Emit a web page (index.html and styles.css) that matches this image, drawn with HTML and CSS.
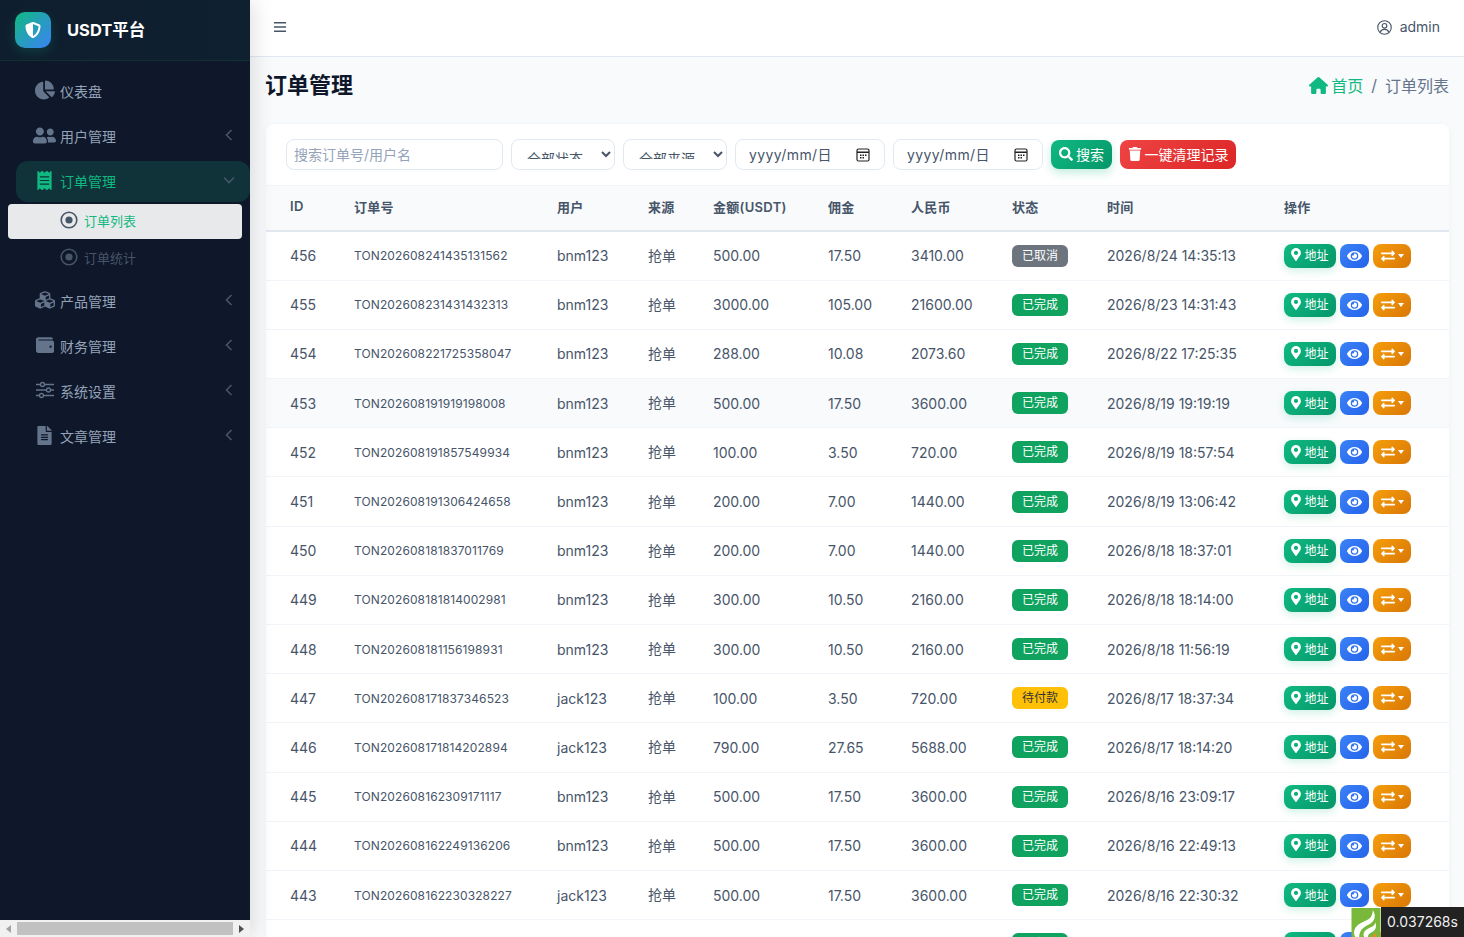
FILE: index.html
```html
<!DOCTYPE html>
<html lang="zh-CN">
<head>
    <meta charset="UTF-8">
    <title>订单管理 - USDT平台</title>
    <link rel="stylesheet" href="styles.css">
</head>
<body>
    <svg class="icon-defs" aria-hidden="true">
        <symbol id="i-pin" viewBox="0 0 384 512"><path d="M172.268 501.67C26.97 291.031 0 269.413 0 192 0 85.961 85.961 0 192 0s192 85.961 192 192c0 77.413-26.97 99.031-172.268 309.67-9.535 13.774-29.93 13.773-39.464 0zM192 272c44.183 0 80-35.817 80-80s-35.817-80-80-80-80 35.817-80 80 35.817 80 80 80z"/></symbol>
        <symbol id="i-eye" viewBox="0 0 576 512"><path d="M572.52 241.4C518.29 135.59 410.93 64 288 64S57.68 135.64 3.48 241.41a32.35 32.35 0 0 0 0 29.19C57.71 376.41 165.07 448 288 448s230.32-71.64 284.52-177.41a32.35 32.35 0 0 0 0-29.19zM288 400a144 144 0 1 1 144-144 143.93 143.93 0 0 1-144 144zm0-240a95.31 95.31 0 0 0-25.31 3.79 47.85 47.85 0 0 1-66.9 66.9A95.78 95.78 0 1 0 288 160z"/></symbol>
        <symbol id="i-swap" viewBox="0 0 512 512"><path d="M0 168v-16c0-13.255 10.745-24 24-24h360V80c0-21.367 25.899-32.042 40.971-16.971l80 80c9.372 9.373 9.372 24.569 0 33.941l-80 80C409.956 271.982 384 261.456 384 240v-48H24c-13.255 0-24-10.745-24-24zm488 152H128v-48c0-21.314-25.862-32.08-40.971-16.971l-80 80c-9.372 9.373-9.372 24.569 0 33.941l80 80C102.057 463.997 128 453.437 128 432v-48h360c13.255 0 24-10.745 24-24v-16c0-13.255-10.745-24-24-24z"/></symbol>
        <symbol id="i-left" viewBox="0 0 8 12"><path d="M6.5 1 1.5 6l5 5" fill="none" stroke="currentColor" stroke-width="1.6"/></symbol>
        <symbol id="i-radio" viewBox="0 0 18 18"><circle cx="9" cy="9" r="7.8" fill="none" stroke="currentColor" stroke-width="1.6"/><circle cx="9" cy="9" r="3.6" fill="currentColor"/></symbol>
        <symbol id="i-cal" viewBox="0 0 14 14"><rect x="1" y="1" width="12" height="12" rx="1.5" fill="none" stroke="currentColor" stroke-width="1.2"/><path d="M1 4.2h12" stroke="currentColor" stroke-width="1.6"/><path d="M4 6.5h1.5V8H4zM6.5 6.5H8V8H6.5zM9 6.5h1.5V8H9zM4 9h1.5v1.5H4zM6.5 9H8v1.5H6.5z" fill="currentColor"/></symbol>
    </svg>

    <div class="app">
        <aside class="sidebar">
            <div class="brand">
                <div class="brand-logo">
                    <svg viewBox="0 0 512 512"><path d="M466.5 83.7l-192-80a48.15 48.15 0 0 0-36.9 0l-192 80C27.7 91.1 16 108.6 16 128c0 198.5 114.5 335.7 221.5 380.3 11.8 4.9 25.1 4.9 36.9 0C360.1 472.6 496 349.3 496 128c0-19.4-11.7-36.9-29.5-44.3zM256.1 446.3l-.1-381 175.9 73.3c-3.3 151.4-82.1 261.1-175.8 307.7z"/></svg>
                </div>
                <span class="brand-name">USDT平台</span>
            </div>
            <nav class="nav">
                <a class="nav-item">
                    <span class="nav-icon"><svg class="ic-20" viewBox="0 0 544 512"><path d="M527.79 288H290.5l158.03 158.03c6.04 6.04 15.98 6.53 22.19.68 38.7-36.46 65.32-85.61 73.13-140.86 1.34-9.46-6.51-17.85-16.06-17.85zm-15.83-64.8C503.72 103.74 408.26 8.28 288.8.04 279.68-.59 272 7.1 272 16.24V240h223.77c9.14 0 16.82-7.68 16.19-16.8zM224 288V50.71c0-9.55-8.39-17.4-17.84-16.06C86.99 51.49-4.1 155.6.14 280.37 4.5 408.51 114.83 513.59 243.03 511.98c50.4-.63 96.97-16.87 135.26-44.03 7.9-5.6 8.42-17.23 1.57-24.08L224 288z"/></svg></span>
                    <span class="nav-text">仪表盘</span>
                </a>
                <a class="nav-item">
                    <span class="nav-icon"><svg class="ic-23" viewBox="0 0 640 512"><path d="M192 256c61.900 0 112-50.100 112-112S253.900 32 192 32 80 82.100 80 144s50.100 112 112 112zm76.800 32h-8.300c-20.800 10-43.900 16-68.500 16s-47.600-6-68.500-16h-8.300C51.600 288 0 339.600 0 403.200V432c0 26.500 21.500 48 48 48h288c26.500 0 48-21.500 48-48v-28.800c0-63.600-51.600-115.200-115.200-115.200zM480 256c53 0 96-43 96-96s-43-96-96-96-96 43-96 96 43 96 96 96zm48 32h-3.800c-13.900 4.800-28.600 8-44.200 8s-30.300-3.200-44.200-8H432c-20.400 0-39.200 5.900-55.700 15.400 24.400 26.300 39.700 61.200 39.700 99.800v38.400c0 2.200-.5 4.300-.6 6.400H592c26.500 0 48-21.500 48-48 0-61.900-50.100-112-112-112z"/></svg></span>
                    <span class="nav-text">用户管理</span>
                    <svg class="nav-arrow"><use href="#i-left"/></svg>
                </a>
                <a class="nav-item active">
                    <span class="nav-icon"><svg class="ic-19" viewBox="0 0 384 512"><path d="M358.4 3.2L320 48 265.6 3.2a15.9 15.9 0 0 0-19.2 0L192 48 137.6 3.2a15.9 15.9 0 0 0-19.2 0L64 48 25.6 3.2C15-4.7 0 2.8 0 16v480c0 13.2 15 20.7 25.6 12.8L64 464l54.4 44.8a15.9 15.9 0 0 0 19.2 0L192 464l54.4 44.8a15.9 15.9 0 0 0 19.2 0L320 464l38.4 44.8c10.5 7.9 25.6.4 25.6-12.8V16c0-13.2-15-20.7-25.6-12.8zM320 360c0 4.4-3.6 8-8 8H72c-4.4 0-8-3.6-8-8v-16c0-4.4 3.6-8 8-8h240c4.4 0 8 3.6 8 8v16zm0-96c0 4.4-3.6 8-8 8H72c-4.4 0-8-3.6-8-8v-16c0-4.4 3.6-8 8-8h240c4.4 0 8 3.6 8 8v16zm0-96c0 4.4-3.6 8-8 8H72c-4.4 0-8-3.6-8-8v-16c0-4.4 3.6-8 8-8h240c4.4 0 8 3.6 8 8v16z"/></svg></span>
                    <span class="nav-text">订单管理</span>
                    <svg class="nav-arrow down"><use href="#i-left"/></svg>
                </a>
                <div class="subnav">
                    <a class="sub-item current"><svg class="sub-icon"><use href="#i-radio"/></svg>订单列表</a>
                    <a class="sub-item"><svg class="sub-icon"><use href="#i-radio"/></svg>订单统计</a>
                </div>
                <a class="nav-item">
                    <span class="nav-icon"><svg class="ic-21" viewBox="0 0 512 512"><path d="M488.6 250.2L392 214V105.500c0-15-9.300-28.400-23.400-33.700l-100-37.500c-8.100-3.100-17.100-3.100-25.300 0l-100 37.500c-14.100 5.300-23.400 18.700-23.400 33.700V214l-96.600 36.200C9.300 255.500 0 268.900 0 283.900V394c0 13.600 7.700 26.100 19.900 32.200l100 50c10.100 5.100 22.100 5.100 32.200 0l103.900-52 103.900 52c10.100 5.100 22.100 5.100 32.200 0l100-50c12.200-6.100 19.900-18.600 19.900-32.200V283.900c0-15-9.300-28.400-23.400-33.700zM358 214.800l-85 31.900v-68.200l85-37v73.300zM154 104.100l102-38.200 102 38.200v.6l-102 41.400-102-41.400v-.6zm84 291.100l-85 42.500v-79.100l85-38.800v75.400zm0-112l-102 41.400-102-41.400v-.6l102-38.200 102 38.200v.6zm240 112l-85 42.500v-79.100l85-38.800v75.400zm0-112l-102 41.400-102-41.400v-.6l102-38.200 102 38.200v.6z"/></svg></span>
                    <span class="nav-text">产品管理</span>
                    <svg class="nav-arrow"><use href="#i-left"/></svg>
                </a>
                <a class="nav-item">
                    <span class="nav-icon"><svg class="ic-18" viewBox="0 0 512 512"><path d="M461.2 128H80c-8.84 0-16-7.160-16-16s7.160-16 16-16h384c8.840 0 16-7.160 16-16 0-26.510-21.490-48-48-48H64C28.650 32 0 60.650 0 96v320c0 35.350 28.650 64 64 64h397.200c28.020 0 50.800-21.530 50.800-48V176c0-26.470-22.780-48-50.800-48zM416 336c-17.670 0-32-14.330-32-32s14.330-32 32-32 32 14.330 32 32-14.330 32-32 32z"/></svg></span>
                    <span class="nav-text">财务管理</span>
                    <svg class="nav-arrow"><use href="#i-left"/></svg>
                </a>
                <a class="nav-item">
                    <span class="nav-icon"><svg class="ic-18" viewBox="0 0 18 16"><path d="M0 2.500h18M0 8h18M0 13.500h18" stroke="currentColor" stroke-width="1.500"/><circle cx="6.500" cy="2.500" r="2" fill="#0f172a" stroke="currentColor" stroke-width="1.300"/><circle cx="12.500" cy="8" r="2" fill="#0f172a" stroke="currentColor" stroke-width="1.300"/><circle cx="5.500" cy="13.500" r="2" fill="#0f172a" stroke="currentColor" stroke-width="1.300"/></svg></span>
                    <span class="nav-text">系统设置</span>
                    <svg class="nav-arrow"><use href="#i-left"/></svg>
                </a>
                <a class="nav-item">
                    <span class="nav-icon"><svg class="ic-19" viewBox="0 0 384 512"><path d="M224 136V0H24C10.700 0 0 10.700 0 24v464c0 13.300 10.700 24 24 24h336c13.300 0 24-10.700 24-24V160H248c-13.200 0-24-10.800-24-24zm64 236c0 6.600-5.400 12-12 12H108c-6.600 0-12-5.400-12-12v-8c0-6.600 5.400-12 12-12h168c6.600 0 12 5.400 12 12v8zm0-64c0 6.600-5.400 12-12 12H108c-6.600 0-12-5.400-12-12v-8c0-6.600 5.400-12 12-12h168c6.600 0 12 5.400 12 12v8zm0-72v8c0 6.600-5.400 12-12 12H108c-6.600 0-12-5.400-12-12v-8c0-6.600 5.400-12 12-12h168c6.600 0 12 5.400 12 12zm96-114.100v6.100H256V0h6.100c6.400 0 12.500 2.500 17 7l97.900 98c4.500 4.500 7 10.600 7 16.900z"/></svg></span>
                    <span class="nav-text">文章管理</span>
                    <svg class="nav-arrow"><use href="#i-left"/></svg>
                </a>
            </nav>
            <div class="side-scroll">
                <span class="scroll-arrow left"></span>
                <span class="scroll-thumb"></span>
                <span class="scroll-arrow right"></span>
            </div>
        </aside>

        <main class="main">
            <header class="topbar">
                <svg class="menu-btn" viewBox="0 0 14 12"><path d="M0 1.500h13M0 6h13M0 10.500h13" stroke="currentColor" stroke-width="1.600"/></svg>
                <div class="user">
                    <svg class="user-icon" viewBox="0 0 16 16"><circle cx="8" cy="8" r="7.200" fill="none" stroke="currentColor" stroke-width="1.200"/><circle cx="8" cy="6.200" r="2.500" fill="none" stroke="currentColor" stroke-width="1.200"/><path d="M3.400 13c.8-2 2.600-3 4.600-3s3.800 1 4.600 3" fill="none" stroke="currentColor" stroke-width="1.200"/></svg>
                    <span>admin</span>
                </div>
            </header>

            <div class="content">
                <div class="page-head">
                    <h1 class="page-title">订单管理</h1>
                    <div class="crumbs">
                        <svg class="crumb-home" viewBox="0 0 576 512"><path d="M575.8 255.500c0 18-15 32.100-32 32.100h-32l.7 160.200c0 2.700-.2 5.400-.5 8.100V472c0 22.100-17.900 40-40 40H456c-1.100 0-2.200 0-3.300-.1c-1.400 .1-2.800 .1-4.200 .1H416 392c-22.100 0-40-17.900-40-40V448 384c0-17.700-14.300-32-32-32H256c-17.700 0-32 14.300-32 32v64 24c0 22.100-17.900 40-40 40H160 128.100c-1.500 0-3-.1-4.500-.2c-1.200 .1-2.400 .2-3.600 .2H104c-22.100 0-40-17.900-40-40V360c0-.9 0-1.900 .1-2.800V287.600H32c-18 0-32-14-32-32.100c0-9 3-17 10-24L266.400 8c7-7 15-8 22-8s15 2 21 7L564.800 231.500c8 7 12 15 11 24z"/></svg>
                        <a class="crumb-link">首页</a>
                        <span class="crumb-sep">/</span>
                        <span>订单列表</span>
                    </div>
                </div>

                <section class="card">
                    <div class="filters">
                        <input class="field search-input" type="text" placeholder="搜索订单号/用户名">
                        <select class="field pick"><option>全部状态</option></select>
                        <select class="field pick"><option>全部来源</option></select>
                        <div class="field date-field"><span>yyyy/mm/日</span><svg class="cal"><use href="#i-cal"/></svg></div>
                        <div class="field date-field"><span>yyyy/mm/日</span><svg class="cal"><use href="#i-cal"/></svg></div>
                        <button class="btn btn-search">
                            <svg viewBox="0 0 512 512"><path d="M505 442.700L405.300 343c-4.500-4.500-10.600-7-17-7H372c27.600-35.300 44-79.700 44-128C416 93.100 322.900 0 208 0S0 93.100 0 208s93.100 208 208 208c48.300 0 92.700-16.400 128-44v16.300c0 6.400 2.500 12.500 7 17l99.700 99.700c9.400 9.400 24.600 9.400 33.900 0l28.300-28.300c9.400-9.400 9.400-24.600.1-34zM208 336c-70.700 0-128-57.200-128-128 0-70.700 57.200-128 128-128 70.700 0 128 57.200 128 128 0 70.700-57.200 128-128 128z"/></svg>搜索
                        </button>
                        <button class="btn btn-clear">
                            <svg viewBox="0 0 448 512"><path d="M432 32H312l-9.400-18.700A24 24 0 0 0 281.100 0H166.800a23.720 23.720 0 0 0-21.400 13.300L136 32H16A16 16 0 0 0 0 48v32a16 16 0 0 0 16 16h416a16 16 0 0 0 16-16V48a16 16 0 0 0-16-16zM53.200 467a48 48 0 0 0 47.900 45h245.800a48 48 0 0 0 47.900-45L416 128H32z"/></svg>一键清理记录
                        </button>
                    </div>

                    <table class="orders">
                        <colgroup>
                            <col class="c-id"><col class="c-no"><col class="c-user"><col class="c-src"><col class="c-amt">
                            <col class="c-fee"><col class="c-cny"><col class="c-state"><col class="c-time"><col class="c-act">
                        </colgroup>
                        <thead>
                            <tr><th>ID</th><th>订单号</th><th>用户</th><th>来源</th><th>金额(USDT)</th><th>佣金</th><th>人民币</th><th>状态</th><th>时间</th><th>操作</th></tr>
                        </thead>
                        <tbody>
                            <tr><td>456</td><td class="order-no">TON202608241435131562</td><td>bnm123</td><td>抢单</td><td>500.00</td><td>17.50</td><td>3410.00</td><td><span class="badge gray">已取消</span></td><td>2026/8/24 14:35:13</td><td><div class="acts"><a class="act act-addr"><svg><use href="#i-pin"/></svg>地址</a><a class="act act-eye"><svg><use href="#i-eye"/></svg></a><a class="act act-swap"><svg><use href="#i-swap"/></svg><i class="caret"></i></a></div></td></tr>
                            <tr><td>455</td><td class="order-no">TON202608231431432313</td><td>bnm123</td><td>抢单</td><td>3000.00</td><td>105.00</td><td>21600.00</td><td><span class="badge green">已完成</span></td><td>2026/8/23 14:31:43</td><td><div class="acts"><a class="act act-addr"><svg><use href="#i-pin"/></svg>地址</a><a class="act act-eye"><svg><use href="#i-eye"/></svg></a><a class="act act-swap"><svg><use href="#i-swap"/></svg><i class="caret"></i></a></div></td></tr>
                            <tr><td>454</td><td class="order-no">TON202608221725358047</td><td>bnm123</td><td>抢单</td><td>288.00</td><td>10.08</td><td>2073.60</td><td><span class="badge green">已完成</span></td><td>2026/8/22 17:25:35</td><td><div class="acts"><a class="act act-addr"><svg><use href="#i-pin"/></svg>地址</a><a class="act act-eye"><svg><use href="#i-eye"/></svg></a><a class="act act-swap"><svg><use href="#i-swap"/></svg><i class="caret"></i></a></div></td></tr>
                            <tr class="hovered"><td>453</td><td class="order-no">TON202608191919198008</td><td>bnm123</td><td>抢单</td><td>500.00</td><td>17.50</td><td>3600.00</td><td><span class="badge green">已完成</span></td><td>2026/8/19 19:19:19</td><td><div class="acts"><a class="act act-addr"><svg><use href="#i-pin"/></svg>地址</a><a class="act act-eye"><svg><use href="#i-eye"/></svg></a><a class="act act-swap"><svg><use href="#i-swap"/></svg><i class="caret"></i></a></div></td></tr>
                            <tr><td>452</td><td class="order-no">TON202608191857549934</td><td>bnm123</td><td>抢单</td><td>100.00</td><td>3.50</td><td>720.00</td><td><span class="badge green">已完成</span></td><td>2026/8/19 18:57:54</td><td><div class="acts"><a class="act act-addr"><svg><use href="#i-pin"/></svg>地址</a><a class="act act-eye"><svg><use href="#i-eye"/></svg></a><a class="act act-swap"><svg><use href="#i-swap"/></svg><i class="caret"></i></a></div></td></tr>
                            <tr><td>451</td><td class="order-no">TON202608191306424658</td><td>bnm123</td><td>抢单</td><td>200.00</td><td>7.00</td><td>1440.00</td><td><span class="badge green">已完成</span></td><td>2026/8/19 13:06:42</td><td><div class="acts"><a class="act act-addr"><svg><use href="#i-pin"/></svg>地址</a><a class="act act-eye"><svg><use href="#i-eye"/></svg></a><a class="act act-swap"><svg><use href="#i-swap"/></svg><i class="caret"></i></a></div></td></tr>
                            <tr><td>450</td><td class="order-no">TON202608181837011769</td><td>bnm123</td><td>抢单</td><td>200.00</td><td>7.00</td><td>1440.00</td><td><span class="badge green">已完成</span></td><td>2026/8/18 18:37:01</td><td><div class="acts"><a class="act act-addr"><svg><use href="#i-pin"/></svg>地址</a><a class="act act-eye"><svg><use href="#i-eye"/></svg></a><a class="act act-swap"><svg><use href="#i-swap"/></svg><i class="caret"></i></a></div></td></tr>
                            <tr><td>449</td><td class="order-no">TON202608181814002981</td><td>bnm123</td><td>抢单</td><td>300.00</td><td>10.50</td><td>2160.00</td><td><span class="badge green">已完成</span></td><td>2026/8/18 18:14:00</td><td><div class="acts"><a class="act act-addr"><svg><use href="#i-pin"/></svg>地址</a><a class="act act-eye"><svg><use href="#i-eye"/></svg></a><a class="act act-swap"><svg><use href="#i-swap"/></svg><i class="caret"></i></a></div></td></tr>
                            <tr><td>448</td><td class="order-no">TON202608181156198931</td><td>bnm123</td><td>抢单</td><td>300.00</td><td>10.50</td><td>2160.00</td><td><span class="badge green">已完成</span></td><td>2026/8/18 11:56:19</td><td><div class="acts"><a class="act act-addr"><svg><use href="#i-pin"/></svg>地址</a><a class="act act-eye"><svg><use href="#i-eye"/></svg></a><a class="act act-swap"><svg><use href="#i-swap"/></svg><i class="caret"></i></a></div></td></tr>
                            <tr><td>447</td><td class="order-no">TON202608171837346523</td><td>jack123</td><td>抢单</td><td>100.00</td><td>3.50</td><td>720.00</td><td><span class="badge yellow">待付款</span></td><td>2026/8/17 18:37:34</td><td><div class="acts"><a class="act act-addr"><svg><use href="#i-pin"/></svg>地址</a><a class="act act-eye"><svg><use href="#i-eye"/></svg></a><a class="act act-swap"><svg><use href="#i-swap"/></svg><i class="caret"></i></a></div></td></tr>
                            <tr><td>446</td><td class="order-no">TON202608171814202894</td><td>jack123</td><td>抢单</td><td>790.00</td><td>27.65</td><td>5688.00</td><td><span class="badge green">已完成</span></td><td>2026/8/17 18:14:20</td><td><div class="acts"><a class="act act-addr"><svg><use href="#i-pin"/></svg>地址</a><a class="act act-eye"><svg><use href="#i-eye"/></svg></a><a class="act act-swap"><svg><use href="#i-swap"/></svg><i class="caret"></i></a></div></td></tr>
                            <tr><td>445</td><td class="order-no">TON202608162309171117</td><td>bnm123</td><td>抢单</td><td>500.00</td><td>17.50</td><td>3600.00</td><td><span class="badge green">已完成</span></td><td>2026/8/16 23:09:17</td><td><div class="acts"><a class="act act-addr"><svg><use href="#i-pin"/></svg>地址</a><a class="act act-eye"><svg><use href="#i-eye"/></svg></a><a class="act act-swap"><svg><use href="#i-swap"/></svg><i class="caret"></i></a></div></td></tr>
                            <tr><td>444</td><td class="order-no">TON202608162249136206</td><td>bnm123</td><td>抢单</td><td>500.00</td><td>17.50</td><td>3600.00</td><td><span class="badge green">已完成</span></td><td>2026/8/16 22:49:13</td><td><div class="acts"><a class="act act-addr"><svg><use href="#i-pin"/></svg>地址</a><a class="act act-eye"><svg><use href="#i-eye"/></svg></a><a class="act act-swap"><svg><use href="#i-swap"/></svg><i class="caret"></i></a></div></td></tr>
                            <tr><td>443</td><td class="order-no">TON202608162230328227</td><td>jack123</td><td>抢单</td><td>500.00</td><td>17.50</td><td>3600.00</td><td><span class="badge green">已完成</span></td><td>2026/8/16 22:30:32</td><td><div class="acts"><a class="act act-addr"><svg><use href="#i-pin"/></svg>地址</a><a class="act act-eye"><svg><use href="#i-eye"/></svg></a><a class="act act-swap"><svg><use href="#i-swap"/></svg><i class="caret"></i></a></div></td></tr>
                            <tr><td></td><td class="order-no"></td><td></td><td></td><td></td><td></td><td></td><td><span class="badge green">已完成</span></td><td></td><td><div class="acts"><a class="act act-addr"><svg><use href="#i-pin"/></svg>地址</a><a class="act act-eye"><svg><use href="#i-eye"/></svg></a><a class="act act-swap"><svg><use href="#i-swap"/></svg><i class="caret"></i></a></div></td></tr>
                        </tbody>
                    </table>
                </section>
            </div>
        </main>
    </div>

    <div class="speed">
        <svg class="speed-logo" viewBox="0 0 30 30">
            <rect width="30" height="30" fill="#7ab83c"/>
            <path d="M3 28C1 20 8 16 15 13c5-2 7-6 7-11 4 6 2 12-4 15-6 3-10 6-10 13H4z" fill="#fff"/>
            <path d="M13 30c-2-5 2-8 7-10 3-1 4-3 5-5 1 5 0 8-4 10-3 1-4 3-4 5z" fill="#fff"/>
            <path d="M22 30c0-2 2-4 4-4l-1 4z" fill="#f08a24"/>
        </svg>
        <span class="speed-time">0.037268s</span>
    </div>
</body>
</html>
```

FILE: styles.css
```css
* {
    box-sizing: border-box;
}
html, body {
    height: 100%;
}
body {
    margin: 0;
    overflow: hidden;
    font-family: Inter, "Noto Sans CJK SC", sans-serif;
    font-size: 14px;
    color: #475569;
    background-color: #f8fafc;
}
a {
    text-decoration: none;
}
.icon-defs {
    display: none;
}
.app {
    display: flex;
    height: 937px;
    overflow: hidden;
}

/* sidebar */
.sidebar {
    position: relative;
    z-index: 2;
    flex: 0 0 250px;
    display: flex;
    flex-direction: column;
    background-color: #0f172a;
    box-shadow: 4px 0 20px rgba(0,0,0,0.12);
}
.brand {
    display: flex;
    align-items: center;
    gap: 16px;
    height: 61px;
    padding-left: 15px;
    background: linear-gradient(90deg, #0f1e2e, #0f2030);
    border-bottom: 1px solid #10312f;
}
.brand-logo {
    width: 36px;
    height: 36px;
    border-radius: 10px;
    display: flex;
    align-items: center;
    justify-content: center;
    background: linear-gradient(135deg, #10b981, #3b82f6);
    box-shadow: 0 4px 12px rgba(16,185,129,0.2);
}
.brand-logo svg {
    width: 16px;
    height: 16px;
    fill: #fff;
}
.brand-name {
    font-size: 16.5px;
    font-weight: 700;
    color: #fff;
    padding-bottom: 3px;
}
.nav {
    flex: 1;
    padding-top: 10px;
}
.nav-item {
    display: flex;
    align-items: center;
    height: 41px;
    margin: 0 0 4px 16px;
    border-radius: 10px 0 0 10px;
    color: #94a3b8;
    position: relative;
}
.nav-icon {
    flex: 0 0 44px;
    display: flex;
    justify-content: center;
    padding: 0 0 3px 13px;
    color: #64748b;
    fill: #64748b;
}
.nav-text {
    font-size: 14px;
    padding-bottom: 1px;
}
.ic-18 { width: 18px; height: 18px; }
.ic-19 { width: 19px; height: 19px; }
.ic-20 { width: 20px; height: 20px; }
.ic-21 { width: 22px; height: 20px; }
.ic-23 { width: 23px; height: 19px; }
.nav-arrow {
    position: absolute;
    right: 17px;
    top: 13px;
    width: 8px;
    height: 12px;
    color: #475569;
}
.nav-arrow.down {
    transform: rotate(-90deg);
}
.nav-item.active {
    background-color: #0f3339;
    border-radius: 12px;
    color: #10b981;
}
.nav-item.active .nav-icon {
    fill: #10b981;
}
.subnav {
    margin: -2px 0 5px 8px;
    display: flex;
    flex-direction: column;
    gap: 2px;
}
.sub-item {
    display: flex;
    align-items: center;
    gap: 6px;
    width: 234px;
    height: 35px;
    padding: 0 0 2px 52px;
    border-radius: 4px;
    font-size: 13px;
    color: #475569;
}
.sub-item.current {
    background-color: #e8e9ea;
    color: #10b981;
}
.sub-icon {
    width: 18px;
    height: 18px;
    margin-bottom: 1px;
    color: #475569;
}
.side-scroll {
    flex: 0 0 17px;
    display: flex;
    align-items: center;
    background-color: #f1f1f1;
}
.scroll-thumb {
    flex: 1;
    height: 13px;
    background-color: #c1c1c1;
}
.scroll-arrow {
    flex: 0 0 17px;
    display: flex;
    justify-content: center;
}
.scroll-arrow::before {
    content: "";
    border-top: 4px solid transparent;
    border-bottom: 4px solid transparent;
}
.scroll-arrow.left::before {
    border-right: 5px solid #a3a3a3;
}
.scroll-arrow.right::before {
    border-left: 5px solid #505050;
}

/* main column */
.main {
    flex: 1;
    min-width: 0;
}
.topbar {
    display: flex;
    align-items: center;
    justify-content: space-between;
    height: 57px;
    padding: 0 24px 2px;
    background-color: #fff;
    border-bottom: 1px solid #e2e8f0;
}
.menu-btn {
    width: 13px;
    height: 12px;
    color: #475569;
}
.user {
    display: flex;
    align-items: center;
    gap: 8px;
    font-size: 14px;
}
.user span {
    padding-bottom: 1px;
}
.user-icon {
    width: 15px;
    height: 15px;
}
.content {
    padding: 0 15px 0 16px;
}
.page-head {
    display: flex;
    align-items: center;
    justify-content: space-between;
    height: 67px;
    padding-bottom: 13px;
}
.page-title {
    margin: 0 0 2px -1px;
    font-size: 22px;
    font-weight: 700;
    color: #0f172a;
}
.crumbs {
    display: flex;
    align-items: center;
    margin-top: 2px;
    font-size: 16px;
    color: #64748b;
}
.crumb-home {
    width: 19px;
    height: 17px;
    margin-right: 3px;
    fill: #10b981;
}
.crumb-link {
    color: #10b981;
}
.crumb-sep {
    margin: 0 8px;
}

/* card */
.card {
    background-color: #fff;
    border-radius: 8px;
    box-shadow: 0 1px 6px rgba(15,23,42,0.04);
    overflow: hidden;
}
.filters {
    display: flex;
    align-items: center;
    gap: 8px;
    padding: 15px 20px;
}
.field {
    height: 31px;
    border: 1px solid #e2e8f0;
    border-radius: 8px;
    background-color: #fff;
    font-family: inherit;
    font-size: 14px;
    color: #475569;
}
.search-input {
    width: 217px;
    padding: 0 7px 1px;
}
.search-input::placeholder {
    color: #94a3b8;
}
.pick {
    width: 104px;
    padding: 9px 11px 10px;
}
.date-field {
    width: 150px;
    display: flex;
    align-items: center;
    justify-content: space-between;
    padding: 0 14px 0 13px;
    letter-spacing: 0.4px;
}
.date-field span {
    padding-bottom: 2px;
}
.cal {
    width: 14px;
    height: 14px;
    color: #222;
}
.btn {
    display: flex;
    align-items: center;
    justify-content: center;
    height: 29px;
    padding: 0 0 2px;
    border: 0;
    border-radius: 8px;
    font-family: inherit;
    font-size: 14px;
    color: #fff;
}
.btn svg {
    width: 14px;
    height: 14px;
    margin-right: 3px;
    fill: #fff;
}
.btn-search {
    width: 61px;
    background: linear-gradient(135deg, #10b981, #059669);
    box-shadow: 0 4px 10px rgba(16,185,129,0.25);
}
.btn-clear {
    width: 116px;
    background: linear-gradient(135deg, #ef4444, #dc2626);
}

/* table */
.orders {
    width: 100%;
    table-layout: fixed;
    border-collapse: separate;
    border-spacing: 0;
}
.c-id { width: 64px; }
.c-no { width: 203px; }
.c-user { width: 91px; }
.c-src { width: 65px; }
.c-amt { width: 115px; }
.c-fee { width: 83px; }
.c-cny { width: 101px; }
.c-state { width: 95px; }
.c-time { width: 177px; }
.c-act { width: 189px; }
.orders th, .orders td {
    padding: 0 0 0 24px;
    text-align: left;
    vertical-align: middle;
    white-space: nowrap;
}
.orders th {
    height: 46.5px;
    padding-bottom: 3px;
    font-size: 13px;
    font-weight: 600;
    letter-spacing: 0.3px;
    background-color: #f8fafc;
    border-top: 1px solid #f1f5f9;
    border-bottom: 2px solid #e2e8f0;
}
.orders td {
    height: 49.2px;
    border-bottom: 1px solid #f1f5f9;
}
.orders td:nth-child(4) {
    padding-bottom: 2px;
}
.orders td.order-no {
    font-size: 12px;
    letter-spacing: 0.1px;
}
.hovered td {
    background-color: #f8fafc;
}
.badge {
    display: inline-block;
    width: 56px;
    height: 22px;
    border-radius: 6px;
    text-align: center;
    font-size: 12px;
    line-height: 21px;
    color: #fff;
    vertical-align: middle;
}
.badge.gray { background-color: #6c757d; }
.badge.green { background-color: #10a35f; }
.badge.yellow { background-color: #ffc107; color: #333; }
.acts {
    display: flex;
    gap: 4px;
}
.act {
    display: flex;
    align-items: center;
    justify-content: center;
    height: 24px;
    border-radius: 8px;
    color: #fff;
    fill: #fff;
    font-size: 12px;
}
.act-addr {
    width: 52px;
    padding-bottom: 2px;
    background: linear-gradient(135deg, #10b981, #059669);
    box-shadow: 0 3px 8px rgba(16,185,129,0.2);
}
.act-addr svg {
    width: 10px;
    height: 13px;
    margin-right: 3px;
}
.act-eye {
    width: 29px;
    background: linear-gradient(135deg, #3b82f6, #2563eb);
}
.act-eye svg {
    width: 15px;
    height: 14px;
}
.act-swap {
    width: 38px;
    background: linear-gradient(135deg, #f59e0b, #d97706);
}
.act-swap svg {
    width: 14px;
    height: 14px;
}
.caret {
    margin-left: 3px;
    border-top: 4px solid #fff;
    border-left: 3px solid transparent;
    border-right: 3px solid transparent;
}

/* page trace badge, sits over the table */
.speed {
    position: fixed;
    right: 0;
    bottom: 0;
    z-index: 5;
    display: flex;
    align-items: flex-end;
}
.speed-logo {
    display: block;
    width: 30px;
    height: 29px;
}
.speed-time {
    display: block;
    width: 83px;
    height: 30px;
    background-color: #222;
    color: #f0f0f0;
    font-size: 14px;
    line-height: 30px;
    text-align: center;
}
```
